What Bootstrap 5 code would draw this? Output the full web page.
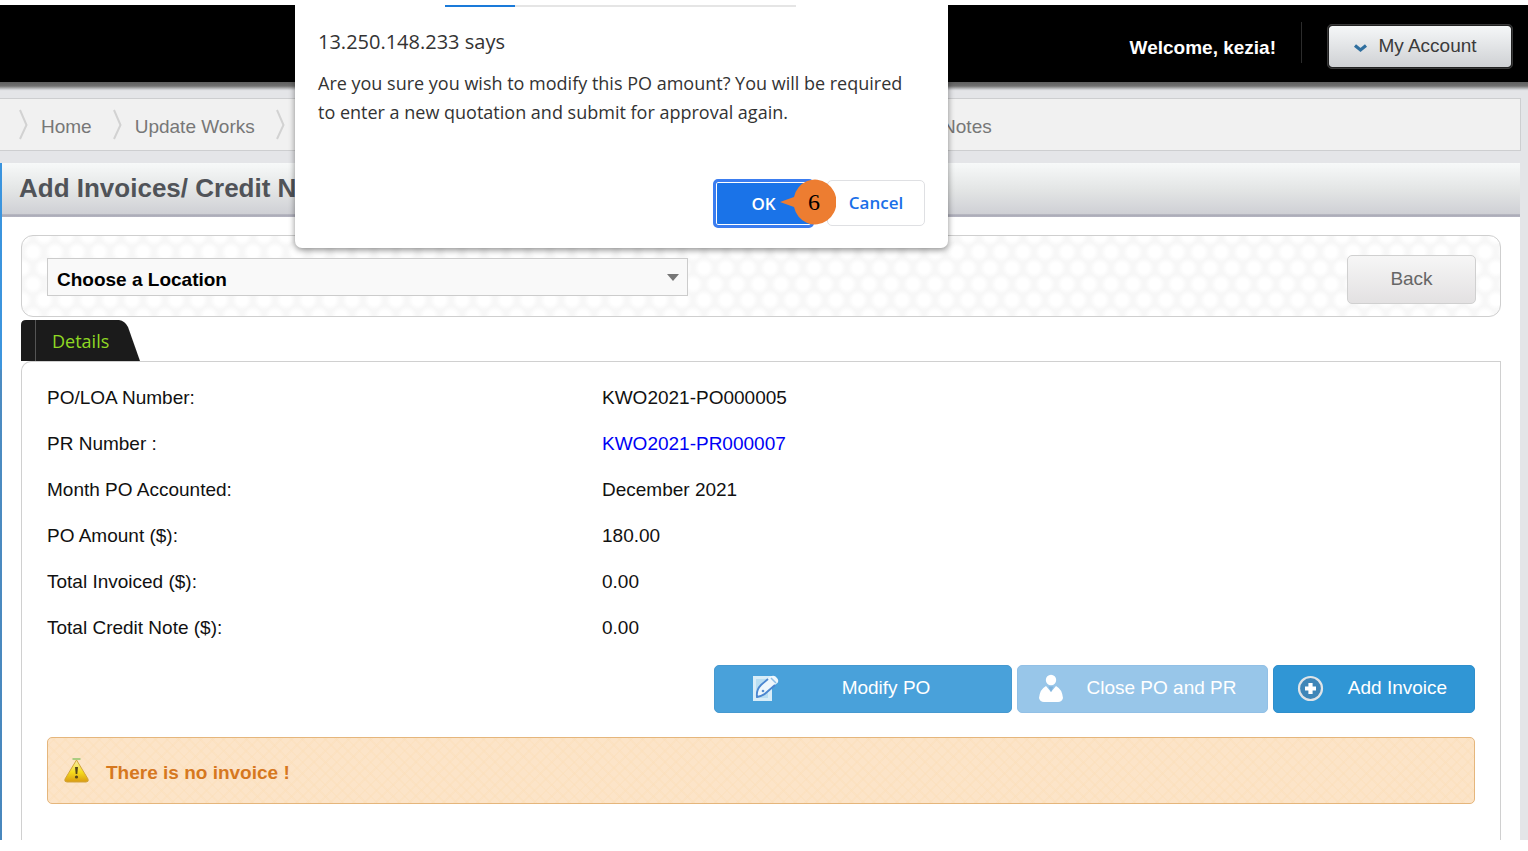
<!DOCTYPE html>
<html lang="en">
<head>
<meta charset="utf-8">
<meta name="viewport" content="width=device-width, initial-scale=1">
<title>Add Invoices/ Credit Notes</title>
<link href="https://cdn.jsdelivr.net/npm/bootstrap@5.3.0/dist/css/bootstrap.min.css" rel="stylesheet">
<style>
  body { font-family: "Liberation Sans", Arial, sans-serif; font-size: 19px; line-height: 24px; color: #111; background: #fff; padding: 5px 0 11px; }
  .site-head { background: #000; height: 77px; padding: 0 15px 0 0; }
  .site-head .welcome { color: #fff; padding: 8px 25px 0 0; }
  .site-head .divider { width: 1px; height: 41px; background: #2c2c2c; margin: 0 25px 2px 0; }
  .btn-account { width: 186px; height: 45px; padding: 0 10px 2px 0; gap: 10px; font-size: 19px; line-height: 24px; color: #3b3b3b; background: linear-gradient(#f5f7f8, #cfd1d4); background-clip: padding-box; border: 2px solid #222; outline: 1px solid #3a3a3a; outline-offset: -1px; border-radius: 5px; margin-top: 6px; }
  .page-wrap { background: #e4e5e8; }
  .head-shade { height: 9px; background: linear-gradient(#5f5f5f, #707070 4px, #a9aaab 6px, #dcdde0 8px, #e4e5e8); }
  .crumbs { height: 53px; margin: 7px 7px 12px 0; padding: 4px 0 0 19px; gap: 21px; background: #f1f1f1; border: solid #cdced0; border-width: 1px 1px 1px 0; }
  .crumbs li { gap: 13px; }
  .crumbs svg { margin-bottom: 4px; }
  .crumbs a { color: #777; text-decoration: none; }
  .crumbs .crumb-last { width: 716px; }
  .sheet { background: #fff; margin-right: 8px; border-left: 2px solid; border-image: linear-gradient(#3a94de 0, #3d95dd 206px, #4c8cc2 208px, #4887bd) 1; }
  .title-bar { height: 54px; padding: 0 17px; font-size: 26px; font-weight: 700; line-height: 51px; color: #505358; background: linear-gradient(#f7f9f9, #e3e5e5 50%, #cfd0d5 94%, #a9a9b6 96%, #b5b5c1); }
  .inner { padding: 18px 19px 0; }
  .filter-bar { height: 82px; padding: 0 24px 0 25px; border: 1px solid #cfcfcf; border-radius: 12px;
    background-color: #f7f7f7;
    background-image: radial-gradient(circle at 50% 50%, #fff 5px, transparent 10px), radial-gradient(circle at 50% 50%, #fff 5px, transparent 10px);
    background-size: 22px 32px; background-position: 0 0, 11px 16px; }
  .filter-bar .form-select { width: 641px; height: 38px; margin-top: 2px; padding: 5px 36px 0 9px; font-size: 19px; font-weight: 700; line-height: 24px; color: #000; background-color: #f9f9f9; border: 1px solid #ccc; border-radius: 0; background-image: url("data:image/svg+xml,%3Csvg xmlns='http://www.w3.org/2000/svg' viewBox='0 0 12 7'%3E%3Cpath d='M0 0h12L6 7z' fill='%23777'/%3E%3C/svg%3E"); background-size: 12px 7px; background-position: right 8px center; }
  .btn-back { width: 129px; height: 49px; margin-top: 6px; font-size: 19px; line-height: 24px; color: #666; background: linear-gradient(#f6f6f6, #e3e1e2); border: 1px solid #d0d0d0; border-radius: 5px; }
  .tab-row { position: relative; z-index: 0; height: 44px; padding-top: 3px; }
  .tab-link { position: relative; width: 119px; height: 41px; padding: 9px 0 0 31px; font-family: "Open Sans", "Noto Sans", sans-serif; font-size: 18px; color: #8fd823; text-decoration: none; }
  .tab-link svg { position: absolute; inset: 0; z-index: -1; }
  .details { padding: 13px 25px 0; border: solid #d0d0d0; border-width: 1px 1px 0; border-radius: 10px 0 0 0; }
  .po-table { margin: 0 0 14px; width: 100%; }
  .po-table th, .po-table td { height: 46px; padding: 0; font-weight: 400; vertical-align: middle; }
  .po-table th { width: 555px; }
  .po-table a { color: #0000f5; text-decoration: none; }
  .actions { gap: 5px; }
  .actions .btn { height: 48px; padding: 0 0 2px; font-size: 19px; line-height: 24px; color: #fff; border-radius: 5px; }
  .act-modify { width: 298px; gap: 63px; background: #49a1da; border: 1px solid #4699d0; }
  .act-modify svg { margin-left: -44px; }
  .act-close { width: 251px; gap: 24px; background: #98c6e9; border: 1px solid #92c0e6; }
  .act-close svg { margin-left: -10px; }
  .act-add { width: 202px; gap: 24px; background: #3096d5; border: 1px solid #2f8fcc; }
  .act-add svg { margin-left: -4px; }
  .actions .btn:disabled { opacity: 1; background: #98c6e9; border-color: #92c0e6; }
  .notice { height: 67px; margin: 24px 0 36px; padding: 4px 16px 0; gap: 15px; font-weight: 700; color: #d6781f; border: 1px solid #e5b67c; border-radius: 5px;
    background: repeating-linear-gradient(45deg, #fbdeb866 0 2px, transparent 2px 8px), repeating-linear-gradient(-45deg, #fbdeb866 0 2px, transparent 2px 8px), #fce4c8; }
  .notice svg { margin: -4px 0 0 -1px; }
  .notice span { padding-left: 1px; }
  .prompt { position: absolute; top: 5px; left: 295px; z-index: 5; width: 653px; height: 243px; padding: 0 23px 22px; background: #fff; border-radius: 0 0 7px 7px; box-shadow: 0 2px 6px rgba(0,0,0,.45); clip-path: inset(0 -12px -12px -12px); font-family: "Open Sans", "Noto Sans", sans-serif; color: #333; }
  .prompt .load-bar { width: 351px; height: 2px; margin: 0 0 19px 127px; background: #e5e5e5; border-radius: 0; }
  .prompt .load-bar .progress-bar { background: #1a7ad9; }
  .prompt h2 { font-size: 20px; line-height: 32px; margin: 0 0 11px; font-weight: 400; }
  .prompt p { font-size: 18px; line-height: 29px; margin: 0; white-space: nowrap; }
  .prompt .choices { gap: 13px; }
  .prompt .btn { padding: 0; font-size: 17px; line-height: 24px; font-weight: 600; border-radius: 5px; }
  .prompt .btn-ok { width: 101px; height: 49px; margin: -1px 0 -2px; color: #fff; background: #1a73e8; border: 3px solid #3b7df0; box-shadow: inset 0 0 0 1px #fff; }
  .prompt .btn-cancel { width: 98px; height: 46px; color: #1a6fe8; background: #fff; border: 1px solid #dfe0e3; }
  .step-mark { position: absolute; right: 112px; bottom: 23px; width: 56px; height: 46px; }
  .step-mark svg { position: absolute; inset: 0; }
  .step-mark span { position: absolute; inset: 0 0 0 12px; text-align: center; font: 24px/46px "Liberation Serif", serif; color: #000; }
</style>
</head>
<body class="d-flex flex-column min-vh-100">
<header class="site-head d-flex align-items-center justify-content-end">
  <strong class="welcome">Welcome, kezia!</strong>
  <span class="divider"></span>
  <button type="button" class="btn btn-account d-flex align-items-center justify-content-center">
    <svg class="mt-1" width="15" height="10" viewBox="0 0 15 10" aria-hidden="true"><path d="M2 2.500 7.500 7 13 2.500" fill="none" stroke="#2f6f9f" stroke-width="3.200"/></svg>
    My Account
  </button>
</header>
<div class="page-wrap d-flex flex-column flex-grow-1">
  <div class="head-shade"></div>
  <nav aria-label="breadcrumb">
    <ol class="crumbs list-unstyled d-flex align-items-center">
      <li class="d-flex align-items-center">
        <svg width="9" height="32" viewBox="0 0 9 32" aria-hidden="true"><path d="M1 1 7.500 16 1 30" fill="none" stroke="#d2d2d2" stroke-width="2"/></svg>
        <a href="#">Home</a></li>
      <li class="d-flex align-items-center">
        <svg width="9" height="32" viewBox="0 0 9 32" aria-hidden="true"><path d="M1 1 7.500 16 1 30" fill="none" stroke="#d2d2d2" stroke-width="2"/></svg>
        <a href="#">Update Works</a></li>
      <li class="crumb-last d-flex align-items-center justify-content-between">
        <svg width="9" height="32" viewBox="0 0 9 32" aria-hidden="true"><path d="M1 1 7.500 16 1 30" fill="none" stroke="#d2d2d2" stroke-width="2"/></svg>
        <a href="#">Add Invoices/ Credit Notes</a></li>
    </ol>
  </nav>
  <main class="sheet d-flex flex-column flex-grow-1">
    <h1 class="title-bar m-0">Add Invoices/ Credit Notes</h1>
    <div class="inner d-flex flex-column flex-grow-1">
      <div class="filter-bar d-flex align-items-center justify-content-between">
        <select class="form-select" aria-label="Choose a Location"><option>Choose a Location</option></select>
        <button type="button" class="btn btn-back">Back</button>
      </div>
      <nav class="tab-row">
        <a href="#details" class="tab-link d-block">
          <svg width="119" height="41" viewBox="0 0 119 41" aria-hidden="true"><path d="M0 41V5Q0 0 5 0H98Q104 1 107 7L119 41Z" fill="#1b1b1b"/><path d="M14.500 0V41" stroke="#555"/></svg>
          Details</a>
      </nav>
      <section id="details" class="details flex-grow-1">
        <table class="po-table">
          <tbody>
            <tr><th scope="row">PO/LOA Number:</th><td>KWO2021-PO000005</td></tr>
            <tr><th scope="row">PR Number :</th><td><a href="#">KWO2021-PR000007</a></td></tr>
            <tr><th scope="row">Month PO Accounted:</th><td>December 2021</td></tr>
            <tr><th scope="row">PO Amount ($):</th><td>180.00</td></tr>
            <tr><th scope="row">Total Invoiced ($):</th><td>0.00</td></tr>
            <tr><th scope="row">Total Credit Note ($):</th><td>0.00</td></tr>
          </tbody>
        </table>
        <div class="actions d-flex justify-content-end">
          <button type="button" class="btn act-modify d-flex align-items-center justify-content-center">
            <svg width="27" height="28" viewBox="0 0 27 28" aria-hidden="true"><path d="M1 2H20V27H1Z" fill="#d8edf8"/><path d="M4 5H16V24H4Z" fill="#b9def2"/><path d="M5 23Q4 16 9 11L18 3Q22 0 25 4T24 10L15 18Q11 22 5 23Z" fill="#eef7fc"/><path d="M16 5 9 11Q4 16 5 23Q11 22 15 18L23 11" fill="none" stroke="#4a86d0" stroke-width="1.800"/><path d="M19 4 24 9" stroke="#8cbde5" stroke-width="1.500"/><circle cx="11" cy="17" r="1.300" fill="#5a90d0"/></svg>
            Modify PO</button>
          <button type="button" class="btn act-close d-flex align-items-center justify-content-center" disabled>
            <svg width="24" height="28" viewBox="0 0 24 28" aria-hidden="true"><circle cx="12" cy="6" r="5.200" fill="#fff"/><path d="M7 12 12 18 17 12Q23 15 24 24Q23 28 19 28H5Q1 28 0 24Q1 15 7 12Z" fill="#fff"/><path d="M9.500 12.500h5L12 18Z" fill="#7fb3dd"/></svg>
            Close PO and PR</button>
          <button type="button" class="btn act-add d-flex align-items-center justify-content-center">
            <svg width="27" height="27" viewBox="0 0 27 27" aria-hidden="true"><circle cx="13.500" cy="13.500" r="11.500" fill="#3f86b8" stroke="#dfe4e8" stroke-width="2.200"/><path d="M13.500 8V19M8 13.500H19" stroke="#fff" stroke-width="4.200"/></svg>
            Add Invoice</button>
        </div>
        <div class="notice d-flex align-items-center" role="alert">
          <svg width="27" height="27" viewBox="0 0 27 27" aria-hidden="true"><defs><linearGradient id="warn" x2="0" y2="1"><stop offset="0" stop-color="#f5edb0"/><stop offset=".55" stop-color="#f6dc1c"/><stop offset="1" stop-color="#d99a12"/></linearGradient></defs><path d="M13.500 3 25 22Q26 25 23 25H4Q1 25 2 22Z" fill="url(#warn)" stroke="#d3a43a"/><path d="M9.500 2H17.500" stroke="#8fc46a" stroke-width="1.500"/><path d="M12 10H15L14.300 17H12.700Z" fill="#55451a"/><circle cx="13.500" cy="20" r="1.600" fill="#55451a"/></svg>
          <span>There is no invoice !</span>
        </div>
      </section>
    </div>
  </main>
</div>
<div class="prompt d-flex flex-column" role="dialog" aria-labelledby="prompt-title">
  <div class="progress load-bar"><div class="progress-bar" style="width:20%"></div></div>
  <h2 id="prompt-title">13.250.148.233 says</h2>
  <p>Are you sure you wish to modify this PO amount? You will be required<br>to enter a new quotation and submit for approval again.</p>
  <div class="choices d-flex justify-content-end mt-auto">
    <button type="button" class="btn btn-ok">OK</button>
    <button type="button" class="btn btn-cancel">Cancel</button>
  </div>
  <div class="step-mark">
    <svg width="56" height="46" viewBox="0 0 56 46" aria-hidden="true"><path d="M0 23 14 18A21.500 22.500 0 1 1 14 28Z" fill="#ed7d31"/></svg>
    <span>6</span>
  </div>
</div>
<script src="https://cdn.jsdelivr.net/npm/bootstrap@5.3.0/dist/js/bootstrap.bundle.min.js"></script>
</body>
</html>
